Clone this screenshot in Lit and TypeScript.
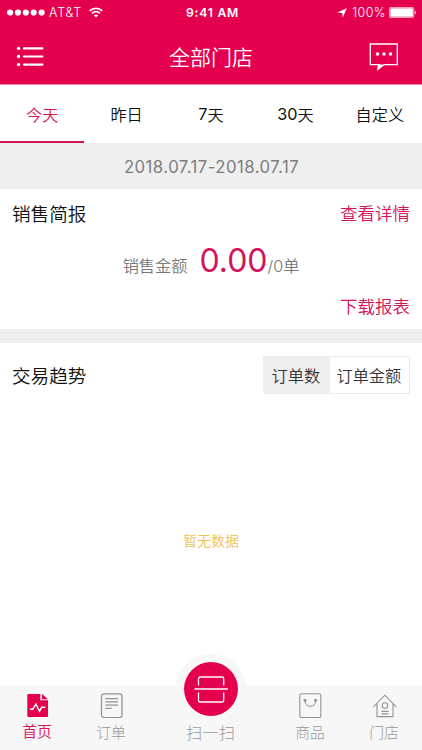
import { LitElement, html, css, svg } from "lit";
import { customElement, state } from "lit/decorators.js";
import { classMap } from "lit/directives/class-map.js";

const icons = {
  home: svg`<path d="M2.300 1h12v6.300h7.700v15.700a1 1 0 0 1-1 1H2.300a1 1 0 0 1-1-1V2a1 1 0 0 1 1-1z" fill="#e5004f"/><path d="M15.900 1l6.100 5.200h-6.100z" fill="#e5004f"/><path d="M4 16.300h2.700l3.200-5.100 3.600 7 2.200-3.900h3.700" fill="none" stroke="#fff" stroke-width="1.400"/>`,
  order: svg`<g fill="none" stroke="#949494" stroke-width="1.300"><rect x="1.500" y=".8" width="20.500" height="23.800" rx="2.500"/><path d="M5.300 5.700h12.800M5.300 8.900h12.800M5.300 12.100h12.800M5.300 15.400h6.300"/></g>`,
  goods: svg`<g fill="none" stroke="#949494" stroke-width="1.100"><rect x=".8" y=".8" width="21" height="23.800" rx="1.800"/><path d="M6 7.700c0 7.400 10.600 7.400 10.600 0"/></g><g fill="#949494"><circle cx="6" cy="7.300" r="1.500"/><circle cx="16.600" cy="7.300" r="1.500"/></g>`,
  shop: svg`<g fill="none" stroke="#949494" stroke-width="1.100"><path d="M.3 13.900L11.800 2.200l11.500 11.700M4 10.600v13h16v-13"/><circle cx="12" cy="12.500" r="2.800"/><path d="M8.500 18.400h7M8.500 20.900h7"/></g>`,
};

@customElement("app-root")
export class AppRoot extends LitElement {
  @state() private day = 0;
  @state() private series = 0;

  static styles = css`
    :host {
      display: flex;
      flex-direction: column;
      height: 750px;
      box-sizing: border-box;
      background: #fff;
      color: #111;
      font-family: Inter, "Noto Sans CJK SC", sans-serif;
      font-weight: 350;
      overflow: hidden;
    }
    svg { display: block; flex: none; }
    header { height: 84px; background: #e5004f; color: #fff; border-bottom: 1px solid #f291b3; }
    .status { height: 25px; display: grid; grid-template-columns: 1fr auto 1fr; align-items: center; font-size: 12px; line-height: 25px; padding: 0 5px 0 7px; }
    .carrier, .power { display: flex; align-items: center; }
    .power { justify-content: flex-end; }
    .carrier span { margin: 0 7px 0 4px; font-size: 12.500px; font-weight: 350; letter-spacing: 0.8px; }
    .power span { margin: 0 3px 0 5px; font-size: 12.500px; font-weight: 350; letter-spacing: 0.45px; }
    .clock { font-weight: 600; font-size: 12.200px; letter-spacing: 0.75px; padding-left: 1px; }
    .title { height: 59px; display: flex; align-items: center; justify-content: space-between; padding: 4px 24px 0 16px; box-sizing: border-box; }
    .title h1 { margin: 0; font-size: 21px; font-weight: 350; line-height: 32px; padding: 2px 0 0 9px; }
    .tabs { height: 58px; display: grid; grid-template-columns: repeat(5, 1fr); flex: none; }
    .tab { display: flex; align-items: center; justify-content: center; font-size: 16.200px; border-bottom: 2px solid transparent; box-sizing: border-box; padding-top: 1px; }
    .tab.on { color: #d3135a; border-color: #d3135a; }
    .num { font-weight: 400; }
    .date { height: 46px; flex: none; background: #efefef; color: #7c7c7c; display: flex; align-items: center; justify-content: center; font-size: 16.700px; font-weight: 400; letter-spacing: 0.48px; padding: 2px 0 0 1px; box-sizing: border-box; }
    .brief { height: 140px; flex: none; box-sizing: border-box; padding: 11px 12px 0; }
    .row { display: flex; align-items: center; justify-content: space-between; height: 28px; }
    h2 { margin: 0; font-size: 18.600px; font-weight: 350; line-height: 28px; }
    .link { color: #d3135a; font-size: 17.500px; line-height: 26px; }
    .sum { display: flex; justify-content: center; align-items: baseline; height: 54px; margin-top: 6px; line-height: 54px; color: #777; font-size: 16.200px; }
    .sum b { font-size: 32px; font-weight: 380; color: #d3135a; margin: 0 0 0 12px; }
    .right { display: flex; justify-content: flex-end; margin-top: 6px; }
    .gap { height: 14px; background: #efefef; flex: none; }
    .trend { height: 64px; padding: 0 12px; display: flex; align-items: center; justify-content: space-between; flex: none; }
    .trend h2 { padding-top: 2px; }
    .seg { display: flex; border: 1px solid #ececec; border-radius: 2px; height: 36px; width: 145px; font-size: 16.200px; color: #333; margin-top: -1px; }
    .seg div { display: flex; align-items: center; justify-content: center; flex: 80; padding: 1px 1px 0 0; white-space: nowrap; }
    .seg div:first-child { flex: 65; padding-right: 2px; }
    .seg .on { background: #efefef; }
    .empty { flex: 1; display: flex; justify-content: center; padding-top: 123px; font-size: 14px; line-height: 22px; color: #f0c24f; }
    nav { height: 65px; flex: none; background: #f7f7f7; display: grid; grid-template-columns: 75px 73px 1fr 73px 75px; color: #999; }
    .item { display: flex; flex-direction: column; align-items: center; padding-top: 8px; font-size: 14.800px; font-weight: 300; line-height: 22px; box-sizing: border-box; height: 65px; }
    .item span { margin: 4px 1px 0 0; }
    .item.on { color: #e0105a; font-weight: 350; }
    .item.on span { margin-top: 3px; }
    .item.scan { padding-top: 0; font-size: 16.300px; }
    .halo { width: 70px; height: 70px; flex: none; margin-top: -31px; border-radius: 50%; background: #f7f7f7; display: flex; align-items: center; justify-content: center; }
    .disc { width: 54px; height: 54px; border-radius: 50%; background: #e5004f; }
    .item.scan span { margin-top: -2px; }
  `;

  private item(label: string, icon: unknown, on = false) {
    return html`<div class=${classMap({ item: true, on })}>
      <svg width="24" height="25" viewBox="0 0 24 25">${icon}</svg><span>${label}</span>
    </div>`;
  }

  render() {
    return html`
      <header>
        <div class="status">
          <div class="carrier">
            <svg width="38" height="7" viewBox="0 0 38 7" fill="#fff">
              ${[3, 10.9, 18.8, 26.7, 34.6].map((x) => svg`<circle cx=${x} cy="3.500" r="3.100"/>`)}
            </svg>
            <span>AT&amp;T</span>
            <svg width="14" height="11" viewBox="0 0 14 11" fill="none" stroke="#fff" stroke-width="1.700">
              <path d="M.7 3.900c3.600-3.500 9-3.500 12.600 0M3 6.300c2.300-2.200 5.700-2.200 8 0"/>
              <path d="M7 10.600L4.900 8.400c1.200-1.200 3-1.200 4.200 0z" fill="#fff" stroke="none"/>
            </svg>
          </div>
          <div class="clock">9:41 AM</div>
          <div class="power">
            <svg width="10" height="10" viewBox="0 0 10 10" fill="#fff"><path d="M9.800.2L5.700 9.700 5.200 4.900.2 4.500z"/></svg>
            <span>100%</span>
            <svg width="28" height="11" viewBox="0 0 28 11"><rect x=".4" y=".4" width="24.400" height="10.200" rx="1.500" fill="none" stroke="#fff" stroke-width=".7"/><rect x="1.300" y="1.300" width="22.600" height="8.400" rx=".7" fill="#fff"/><path d="M25.800 3.500q2.200 2 0 4z" fill="#fff"/></svg>
          </div>
        </div>
        <div class="title">
          <svg width="28" height="22" viewBox="0 0 28 22" stroke="#fff" fill="#fff" stroke-linecap="round">
            ${[2.4, 10.5, 18.6].map((y) => svg`<circle cx="2.600" cy=${y} r="1.700" stroke="none"/><path d=${`M8 ${y}h18.400`} stroke-width="2.200"/>`)}
          </svg>
          <h1>全部门店</h1>
          <svg width="29" height="28" viewBox="0 0 29 28" fill="none" stroke="#fff" stroke-width="1.300">
            <path d="M1.300 1h27v20.600H15.100L8.900 26.300l1.200-4.700H1.300z"/><path d="M8.800 21.300l-.4 5.600 6.600-5.200z" fill="#fff" stroke="none"/>
            <g fill="#fff" stroke="none"><circle cx="8.500" cy="11" r="1.800"/><circle cx="15" cy="11" r="1.800"/><circle cx="21.500" cy="11" r="1.800"/></g>
          </svg>
        </div>
      </header>
      <div class="tabs">
        ${[["", "今天"], ["", "昨日"], ["7", "天"], ["30", "天"], ["", "自定义"]].map(([n, t], i) => html`<div class=${classMap({ tab: true, on: i === this.day })} @click=${() => (this.day = i)}><span class="num">${n}</span>${t}</div>`)}
      </div>
      <div class="date">2018.07.17-2018.07.17</div>
      <section class="brief">
        <div class="row"><h2>销售简报</h2><div class="link">查看详情</div></div>
        <div class="sum"><span>销售金额</span><b>0.00</b><span>/0单</span></div>
        <div class="right"><div class="link">下载报表</div></div>
      </section>
      <div class="gap"></div>
      <section class="trend">
        <h2>交易趋势</h2>
        <div class="seg">
          ${["订单数", "订单金额"].map((t, i) => html`<div class=${classMap({ on: i === this.series })} @click=${() => (this.series = i)}>${t}</div>`)}
        </div>
      </section>
      <div class="empty">暂无数据</div>
      <nav>
        ${this.item("首页", icons.home, true)}
        ${this.item("订单", icons.order)}
        <div class="item scan">
          <div class="halo"><svg class="disc" viewBox="0 0 54 54" fill="none" stroke="#fff" stroke-width="1.300">
            <path d="M14.500 23.500v-6.800a1.700 1.700 0 0 1 1.700-1.700h21.800a1.700 1.700 0 0 1 1.700 1.700v6.800M14.500 30.500v7.800a1.700 1.700 0 0 0 1.700 1.700h21.800a1.700 1.700 0 0 0 1.700-1.700v-7.800M10.500 27h33.500"/>
          </svg></div>
          <span>扫一扫</span>
        </div>
        ${this.item("商品", icons.goods)}
        ${this.item("门店", icons.shop)}
      </nav>
    `;
  }
}
